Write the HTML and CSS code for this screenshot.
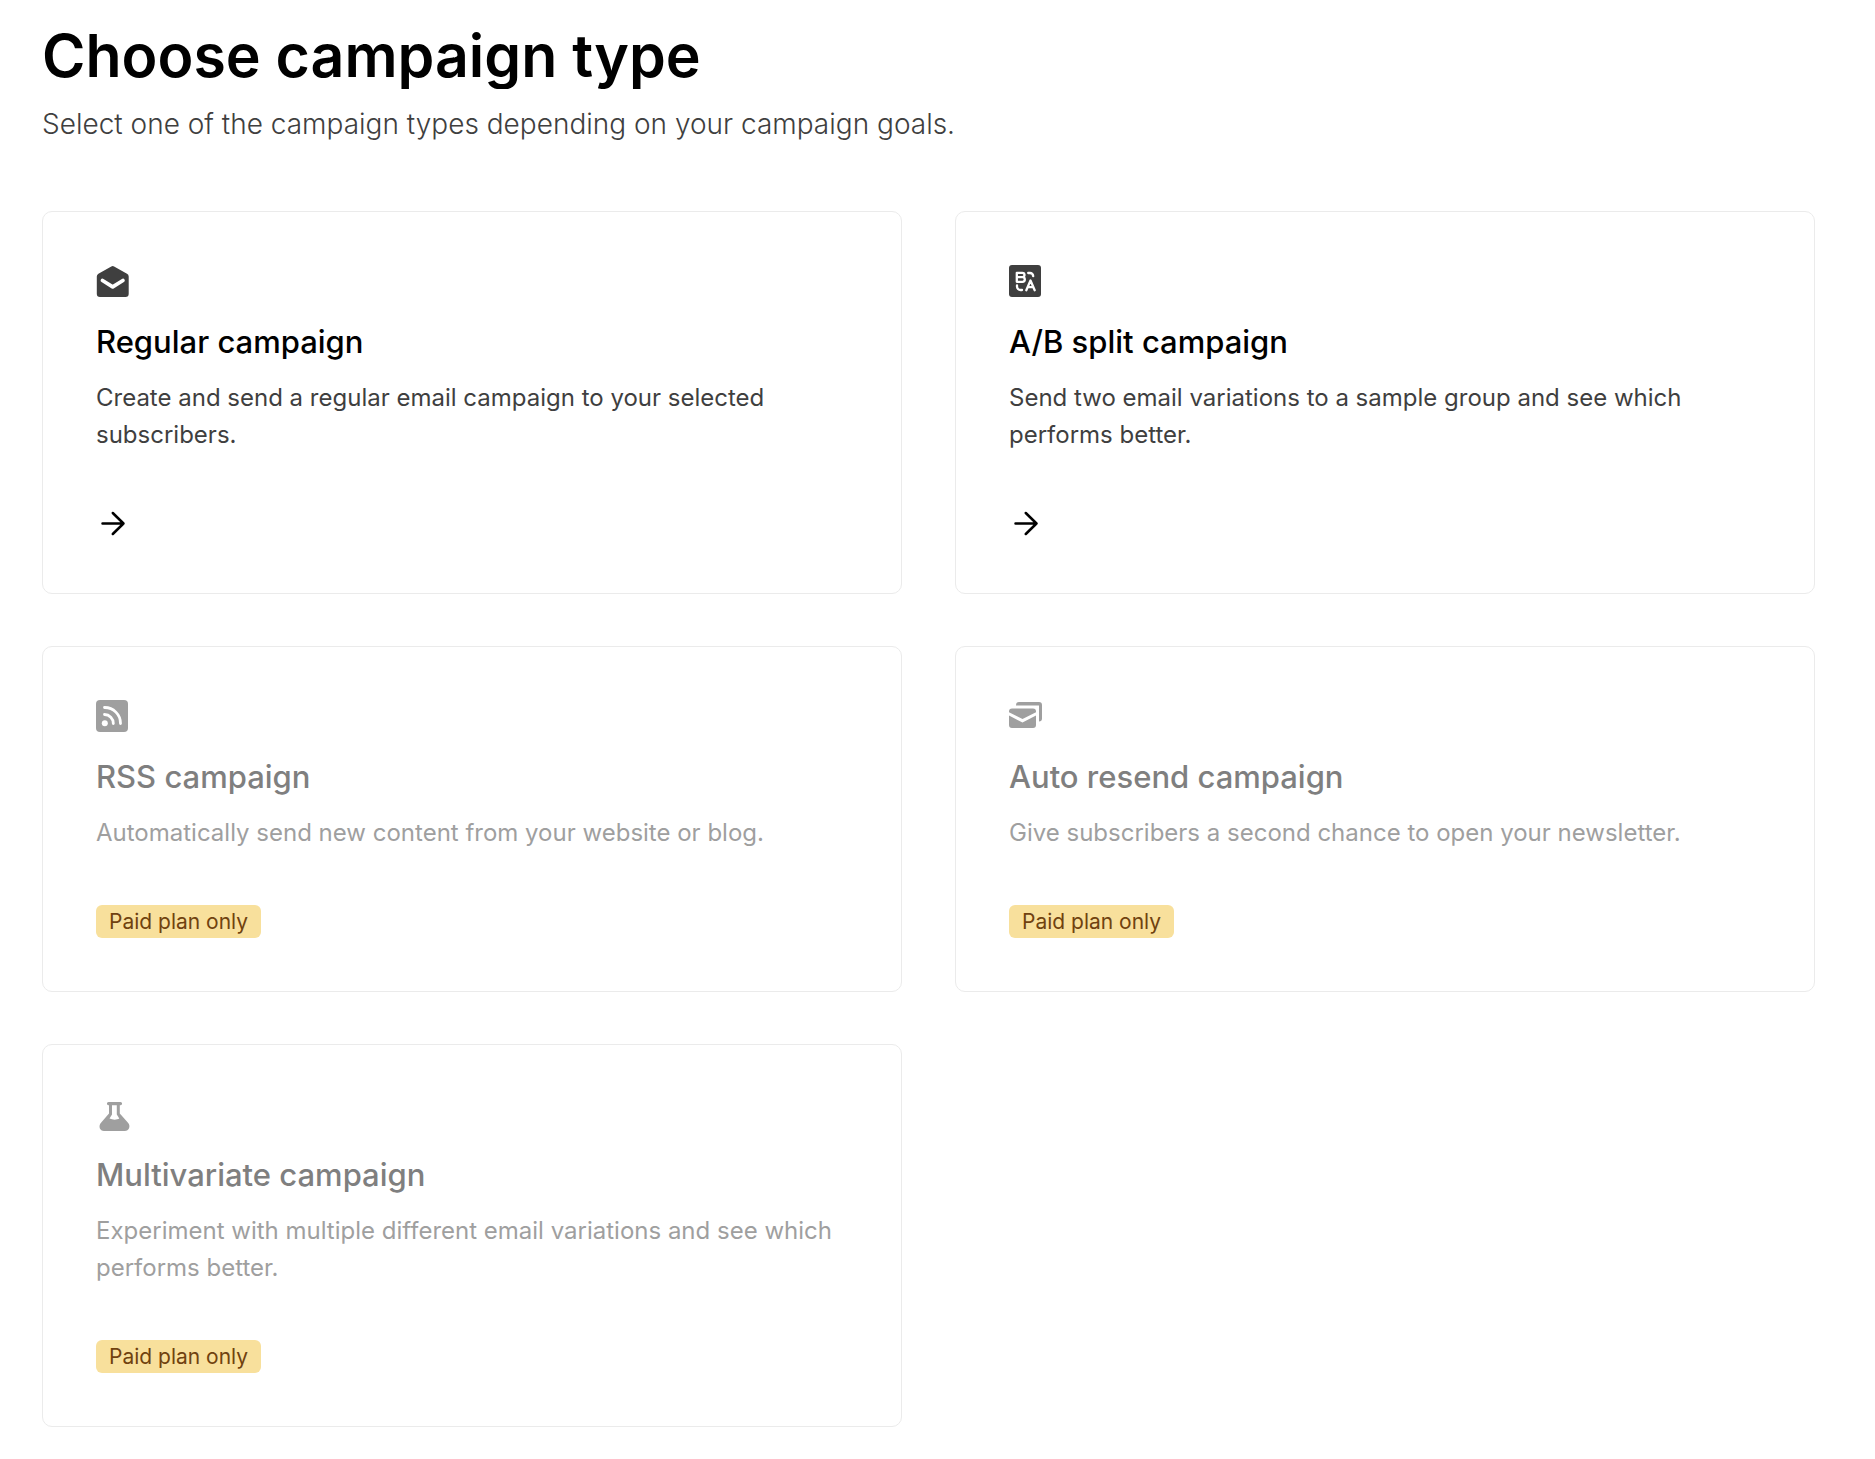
FILE: index.html
```
<!DOCTYPE html>
<html lang="en">
<head>
    <meta charset="UTF-8">
    <meta name="viewport" content="width=device-width, initial-scale=1.0">
    <title>Choose campaign type</title>
    <link rel="stylesheet" href="styles.css">
</head>
<body>
    <main class="page">
        <header class="page-header">
            <h1>Choose campaign type</h1>
            <p>Select one of the campaign types depending on your campaign goals.</p>
        </header>

        <div class="campaign-grid">
            <a class="card" href="#regular">
                <svg class="card-icon" viewBox="0 0 32 32" aria-hidden="true">
                    <path fill="currentColor" d="M15.300 1.400a3 3 0 0 1 2.800 0L31 8.800A3.200 3.200 0 0 1 32.700 11.500v17.300a3.200 3.200 0 0 1-3.200 3.200H4a3.200 3.200 0 0 1-3.200-3.200V11.500a3.200 3.200 0 0 1 1.600-2.700z"/>
                    <path fill="none" stroke="#fff" stroke-width="3.800" stroke-linecap="round" stroke-linejoin="round" d="M6.500 15.500 16.700 21.800l10.200-6.300"/>
                </svg>
                <h2>Regular campaign</h2>
                <p>Create and send a regular email campaign to your selected subscribers.</p>
                <svg class="arrow" viewBox="0 0 33 33" aria-hidden="true">
                    <path d="M6.500 16.500h21M16.800 6l10.700 10.500L16.800 27"/>
                </svg>
            </a>

            <a class="card" href="#ab-split">
                <svg class="card-icon" viewBox="0 0 32 32" aria-hidden="true">
                    <rect width="32" height="32" rx="3" fill="currentColor"/>
                    <g fill="none" stroke="#fff" stroke-width="2.300" stroke-linecap="round" stroke-linejoin="round">
                        <path d="M7.800 7.800h5.500a2.200 2.200 0 0 1 0 4.400H7.800zM7.800 12.200h5.700a2.300 2.300 0 0 1 0 4.600H7.800z"/>
                        <path d="M17.300 25.200 21.500 15.500l4.200 9.700M19 22.200h5"/>
                        <path d="M19.200 8h1.800a3.200 3.200 0 0 1 3.200 3.200M8 20.500v1a3.500 3.500 0 0 0 3.500 3.500H13"/>
                    </g>
                </svg>
                <h2>A/B split campaign</h2>
                <p>Send two email variations to a sample group and see which performs better.</p>
                <svg class="arrow" viewBox="0 0 33 33" aria-hidden="true">
                    <path d="M6.500 16.500h21M16.800 6l10.700 10.500L16.800 27"/>
                </svg>
            </a>

            <div class="card disabled">
                <svg class="card-icon" viewBox="0 0 32 32" aria-hidden="true">
                    <rect width="32" height="32" rx="4" fill="currentColor"/>
                    <circle cx="8.800" cy="23.300" r="3" fill="#fff"/>
                    <path fill="none" stroke="#fff" stroke-width="2.800" stroke-linecap="round" d="M8.500 14.500a8.800 8.800 0 0 1 8.800 9M8.500 7.500a15.800 15.800 0 0 1 16 16"/>
                </svg>
                <h2>RSS campaign</h2>
                <p>Automatically send new content from your website or blog.</p>
                <span class="badge">Paid plan only</span>
            </div>

            <div class="card disabled">
                <svg class="card-icon" viewBox="0 0 32 32" aria-hidden="true">
                    <g fill="currentColor">
                        <path d="M7 5.500V5a3 3 0 0 1 3-3h20a3 3 0 0 1 3 3v13.500a3 3 0 0 1-3 3V5.500z"/>
                        <path d="M0 11.500a3 3 0 0 1 3-3h21a3 3 0 0 1 3 3v.7L13.500 19 0 12.200z"/>
                        <path d="M0 15.500l13.500 7 13.500-7V25a3 3 0 0 1-3 3H3a3 3 0 0 1-3-3z"/>
                    </g>
                </svg>
                <h2>Auto resend campaign</h2>
                <p>Give subscribers a second chance to open your newsletter.</p>
                <span class="badge">Paid plan only</span>
            </div>

            <div class="card disabled">
                <svg class="card-icon" viewBox="0 0 32 32" aria-hidden="true">
                    <path fill="currentColor" fill-rule="evenodd" d="M12.500 4h12a1.600 1.600 0 0 1 0 3.200h-.7v8.300l8.200 9.200c3 3.400 1 8.300-3.200 8.300H8c-4.200 0-6-4.900-3-8.300l8-9.200V7.200h-.5a1.600 1.600 0 0 1 0-3.200zM16 7.200v9.300L13.500 20.500c3 1.500 7.500 1.500 9.800 0l-2.500-4V7.200z"/>
                </svg>
                <h2>Multivariate campaign</h2>
                <p>Experiment with multiple different email variations and see which performs better.</p>
                <span class="badge">Paid plan only</span>
            </div>
        </div>
    </main>
</body>
</html>
```
FILE: styles.css
```
* {
    box-sizing: border-box;
}
body {
    margin: 0;
    background-color: #fff;
    color: #000;
    font-family: Inter, "Liberation Sans", sans-serif;
}
h1, h2, p {
    margin: 0;
}
.page {
    padding: 26px 60px 32px 42px;
}
.page-header {
    margin-bottom: 69px;
}
.page-header h1 {
    padding-bottom: 3px;
    font-size: 59px;
    font-weight: 600;
    line-height: 60px;
    overflow: hidden;
}
.page-header p {
    margin-top: 17px;
    color: #3f3f3f;
    font-size: 28px;
    font-weight: 300;
    line-height: 36px;
}
.campaign-grid {
    display: grid;
    grid-template-columns: 1fr 1fr;
    gap: 52px 53px;
}
.card {
    display: flex;
    flex-direction: column;
    align-items: flex-start;
    padding: 53px;
    border: 1px solid #ebebeb;
    border-radius: 10px;
    color: #000;
    text-decoration: none;
}
.card:hover {
    border-color: #bdbdbd;
}
.card-icon {
    width: 32px;
    height: 32px;
    margin-bottom: 26px;
    color: #3f3f3f;
    overflow: visible;
}
.card h2 {
    margin-bottom: 18px;
    font-size: 31px;
    font-weight: 500;
    line-height: 38px;
}
.card p {
    margin-bottom: 54px;
    color: #3f3f3f;
    font-size: 24px;
    font-weight: 400;
    line-height: 37px;
}
.arrow {
    width: 33px;
    height: 33px;
    fill: none;
    stroke: #000;
    stroke-width: 2.5;
    stroke-linecap: round;
    stroke-linejoin: round;
}
.disabled h2 {
    color: #7f7f7f;
}
.disabled .card-icon,
.disabled p {
    color: #9f9f9f;
}
.badge {
    padding: 0 13px;
    border-radius: 6px;
    background-color: #f8e09c;
    color: #70420f;
    font-size: 21px;
    line-height: 33px;
}
```
